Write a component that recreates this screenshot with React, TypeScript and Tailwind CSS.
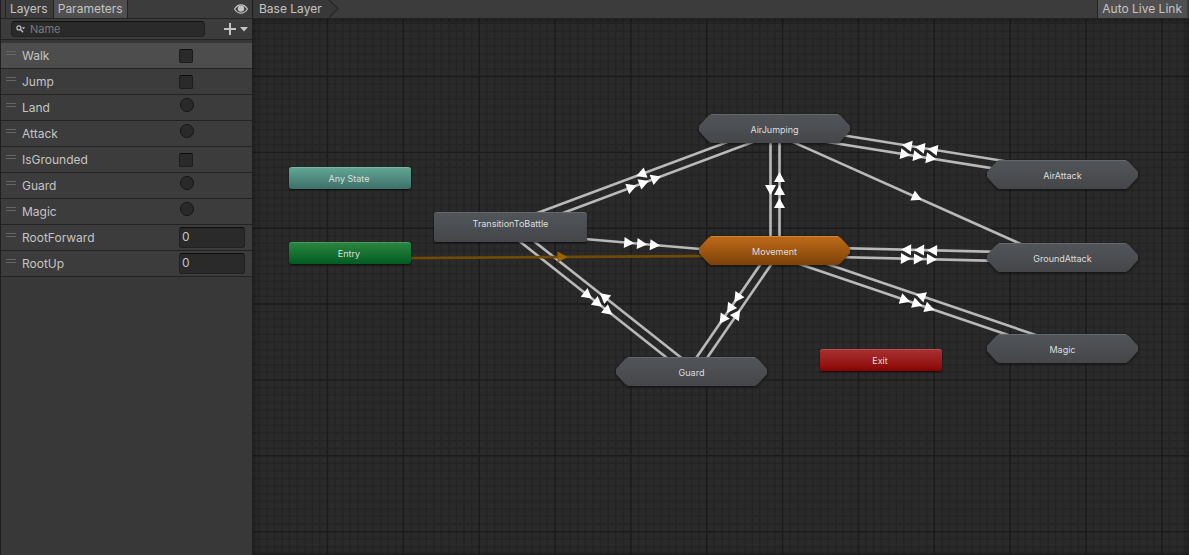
import { useState } from "react";

type Kind = "bool" | "trigger" | "float";

const parameters: { name: string; kind: Kind }[] = [
  { name: "Walk", kind: "bool" },
  { name: "Jump", kind: "bool" },
  { name: "Land", kind: "trigger" },
  { name: "Attack", kind: "trigger" },
  { name: "IsGrounded", kind: "bool" },
  { name: "Guard", kind: "trigger" },
  { name: "Magic", kind: "trigger" },
  { name: "RootForward", kind: "float" },
  { name: "RootUp", kind: "float" },
];

type Point = [number, number];

// Anchor points of the nodes, in canvas coordinates.
const anchors: Record<string, Point> = {
  entry: [97, 235],
  battle: [257, 209],
  air: [522, 110],
  movement: [522, 232],
  guard: [439, 353],
  airAttack: [810, 156],
  groundAttack: [810, 239],
  magic: [810, 330],
};

const transitions: { from: string; to: string; arrows: number; isDefault?: boolean }[] = [
  { from: "battle", to: "air", arrows: 3 },
  { from: "air", to: "battle", arrows: 1 },
  { from: "battle", to: "movement", arrows: 3 },
  { from: "battle", to: "guard", arrows: 3 },
  { from: "guard", to: "battle", arrows: 1 },
  { from: "entry", to: "movement", arrows: 1, isDefault: true },
  { from: "movement", to: "air", arrows: 3 },
  { from: "air", to: "movement", arrows: 1 },
  { from: "movement", to: "guard", arrows: 3 },
  { from: "guard", to: "movement", arrows: 1 },
  { from: "air", to: "airAttack", arrows: 3 },
  { from: "airAttack", to: "air", arrows: 3 },
  { from: "air", to: "groundAttack", arrows: 1 },
  { from: "movement", to: "groundAttack", arrows: 3 },
  { from: "groundAttack", to: "movement", arrows: 3 },
  { from: "movement", to: "magic", arrows: 3 },
  { from: "magic", to: "movement", arrows: 1 },
];

function Transition({ from, to, arrows, isDefault }: (typeof transitions)[number]) {
  const [x1, y1] = anchors[from];
  const [x2, y2] = anchors[to];
  const length = Math.hypot(x2 - x1, y2 - y1);
  const angle = (Math.atan2(y2 - y1, x2 - x1) * 180) / Math.PI;
  const offsets = arrows === 3 ? [-13, 0, 13] : [0];
  return (
    <g transform={`translate(${x1} ${y1}) rotate(${angle})`}>
      <line x1={0} y1={4.5} x2={length} y2={4.5} stroke={isDefault ? "#6f4a07" : "#b9b9b9"} strokeWidth={2.6} />
      {offsets.map((o) => (
        <path
          key={o}
          transform={`translate(${length / 2 + o} 4.5)`}
          d="M-5 -5.5L5 0L-5 5.5Z"
          fill={isDefault ? "#996300" : "#ffffff"}
        />
      ))}
    </g>
  );
}

const STEP = 7.585;

function gridPath(major: boolean) {
  let d = "";
  for (let i = -9; i < 330; i++) {
    if ((i % 10 === 0) !== major) continue;
    d += `M${(74.5 + i * STEP).toFixed(2)} 0V1600`;
    if (i > -8 && i < 210) d += `M0 ${(57.5 + i * STEP).toFixed(2)}H2600`;
  }
  return d;
}

function Hex({ label, place, tone = "gray" }: { label: string; place: string; tone?: "gray" | "orange" }) {
  const fill = tone === "gray" ? "url(#grayFill)" : "url(#orangeFill)";
  return (
    <div className={`absolute flex h-[30px] w-[151px] items-center justify-center ${place}`}>
      <svg className="absolute inset-0 overflow-visible" width="151" height="30" aria-hidden="true">
        <path
          d="M12 0H139L142 2L151 12V17L142 27L139 29H12L9 27L0 17V12L9 2Z"
          fill={fill}
          style={{ filter: "drop-shadow(0 1px 1.5px rgba(0,0,0,.6))" }}
        />
        <path d="M12 .5H139" stroke={tone === "gray" ? "#64686b" : "#d08438"} />
      </svg>
      <span className="relative mt-0.5">{label}</span>
    </div>
  );
}

export default function App() {
  const [values, setValues] = useState<Record<string, string>>({ RootForward: "0", RootUp: "0" });

  return (
    <div className="flex h-screen overflow-hidden bg-[#383838] font-['Inter',sans-serif] text-xs text-[#c4c4c4]">
      <aside className="flex w-[253px] shrink-0 flex-col border-x border-[#1f1f1f]">
        <div className="flex h-[19px] shrink-0 items-stretch border-b border-[#232323] bg-[#3c3c3c] pl-1">
          <button className="border-l border-[#232323] pr-[5px] pl-1 leading-4">Layers</button>
          <button className="border-x border-[#232323] bg-[#505050] px-1 leading-4">Parameters</button>
          <button className="ml-auto flex items-center pr-1" aria-label="Toggle live values">
            <svg width="14" height="10" viewBox="0 0 14 10" aria-hidden="true">
              <path d="M.5 5C2.6 1.800 4.700 .8 7 .8S11.400 1.800 13.500 5C11.400 8.200 9.300 9.200 7 9.200S2.600 8.200 .5 5Z" fill="none" stroke="#c4c4c4" strokeWidth="1.200" />
              <circle cx="7" cy="4.600" r="3.200" fill="#c4c4c4" />
            </svg>
          </button>
        </div>
        <div className="flex h-[21px] shrink-0 items-center border-b border-[#232323] bg-[#3c3c3c] pr-1 pl-2.5">
          <label className="flex h-4 w-[194px] items-center rounded-sm border border-[#212121] border-t-[#0f0f0f] bg-[#2a2a2a] pl-1">
            <svg width="10" height="8" viewBox="0 0 10 8" className="shrink-0" aria-hidden="true">
              <circle cx="2.900" cy="2.900" r="2" fill="none" stroke="#c4c4c4" strokeWidth="1.100" />
              <path d="M4.300 4.300L7 7.200" stroke="#c4c4c4" strokeWidth="1.300" />
              <path d="M5.800 2.200H9.200L7.500 4.200Z" fill="#c4c4c4" />
            </svg>
            <input
              aria-label="Search parameters"
              placeholder="Name"
              className="ml-1 w-full min-w-0 bg-transparent text-[11px] leading-4 outline-none placeholder:text-[#7a7a7a]"
            />
          </label>
          <button className="ml-auto flex items-center" aria-label="Add parameter">
            <svg width="25" height="12" viewBox="0 0 25 12" aria-hidden="true">
              <path d="M7 0V12M1 6H13" stroke="#c4c4c4" strokeWidth="2" />
              <path d="M17 4H25L21 8.500Z" fill="#c4c4c4" />
            </svg>
          </button>
        </div>
        <ul className="border-t-3 border-[#363636]">
          {parameters.map(({ name, kind }, i) => (
            <li
              key={name}
              className={`flex h-[26px] items-center border-b border-[#232323] pr-[7px] pl-[5px] ${i === 0 ? "bg-[#4d4d4d]" : "bg-[#3c3c3c]"}`}
            >
              <span className="mb-[5px] h-1 w-2.5 shrink-0 border-y border-[#666666]" aria-hidden="true" />
              <label htmlFor={name} className="ml-1.5 w-[157px] shrink-0 leading-4">
                {name}
              </label>
              {kind === "bool" && (
                <input
                  id={name}
                  type="checkbox"
                  className="mt-px size-3.5 appearance-none rounded-xs border border-[#1c1c1c] border-t-[#0d0d0d] bg-[#2a2a2a] checked:bg-[#c4c4c4]"
                />
              )}
              {kind === "trigger" && (
                <input
                  id={name}
                  type="radio"
                  name={name}
                  className="mb-[5px] ml-px size-3.5 appearance-none rounded-full border border-[#151515] bg-[#2a2a2a] checked:bg-[#c4c4c4]"
                />
              )}
              {kind === "float" && (
                <input
                  id={name}
                  type="text"
                  value={values[name]}
                  onChange={(e) => setValues({ ...values, [name]: e.target.value })}
                  className="h-[21px] w-full min-w-0 rounded-[3px] border border-[#212121] border-t-[#0d0d0d] bg-[#2a2a2a] px-0.5 pb-0.5 leading-4 outline-none"
                />
              )}
            </li>
          ))}
        </ul>
      </aside>

      <main className="flex min-w-0 grow flex-col">
        <header className="flex h-[19px] shrink-0 items-stretch border-b border-[#232323] bg-[#3c3c3c] pr-0.5">
          <nav className="flex" aria-label="Layer path">
            <a href="#base-layer" className="bg-[#383838] pr-1 pl-1.5 leading-[17px]">
              Base Layer
            </a>
            <svg width="14" height="18" viewBox="0 0 14 18" aria-hidden="true">
              <path d="M0 0H3L12 8.500L3 18H0Z" fill="#383838" />
              <path d="M3 0L12 8.500L3 18" fill="none" stroke="#252525" strokeWidth="1.200" />
            </svg>
          </nav>
          <button className="ml-auto border-l border-[#232323] bg-[#505050] pr-[5px] pl-1 leading-4">
            Auto Live Link
          </button>
        </header>

        <section
          className="relative grow overflow-hidden bg-[#2a2a2a] text-[9px] leading-3 text-[#dedede]"
          aria-label="State machine"
        >
          <svg className="absolute inset-0 size-full" aria-hidden="true">
            <defs>
              <linearGradient id="grayFill" x2="0" y2="1">
                <stop stopColor="#515559" />
                <stop offset="1" stopColor="#45464a" />
              </linearGradient>
              <linearGradient id="orangeFill" x2="0" y2="1">
                <stop stopColor="#bf6b18" />
                <stop offset="1" stopColor="#7e420a" />
              </linearGradient>
            </defs>
            <path d={gridPath(false)} stroke="#242424" strokeWidth="1.300" />
            <path d={gridPath(true)} stroke="#1b1b1b" strokeWidth="1.400" />
            {transitions.map((t) => (
              <Transition key={t.from + t.to} {...t} />
            ))}
          </svg>
          <div className="pointer-events-none absolute inset-0 shadow-[inset_0_0_6px_rgba(0,0,0,0.5)]" />

          <div className="absolute top-[148px] left-[36px] flex h-[22px] w-[122px] items-center justify-center rounded-[3px] border-t border-[#7db5a7] bg-linear-to-b from-[#61a593] to-[#3d7069] pr-0.5 shadow-[0_1px_2px_rgba(0,0,0,0.7)]">
            Any State
          </div>
          <div className="absolute top-[223px] left-[36px] flex h-[22px] w-[122px] items-center justify-center rounded-[3px] border-t border-[#4c9a5c] bg-linear-to-b from-[#288540] to-[#005c20] pr-0.5 shadow-[0_1px_2px_rgba(0,0,0,0.7)]">
            Entry
          </div>
          <div className="absolute top-[330px] left-[567px] flex h-[22px] w-[122px] items-center justify-center rounded-[3px] border-t border-[#b85050] bg-linear-to-b from-[#a82f2f] to-[#8a0000] pr-0.5 shadow-[0_1px_2px_rgba(0,0,0,0.7)]">
            Exit
          </div>
          <div className="absolute top-[193px] left-[181px] flex h-[30px] w-[153px] justify-center rounded-[3px] border-t border-[#64686b] bg-linear-to-b from-[#515559] to-[#45464a] pt-[5px] shadow-[0_1px_2px_rgba(0,0,0,0.7)]">
            TransitionToBattle
          </div>
          <Hex label="AirJumping" place="top-[95px] left-[446px]" />
          <Hex label="Movement" place="top-[217px] left-[446px]" tone="orange" />
          <Hex label="Guard" place="top-[338px] left-[363px]" />
          <Hex label="AirAttack" place="top-[141px] left-[734px]" />
          <Hex label="GroundAttack" place="top-[224px] left-[734px]" />
          <Hex label="Magic" place="top-[315px] left-[734px]" />
        </section>
      </main>
    </div>
  );
}
